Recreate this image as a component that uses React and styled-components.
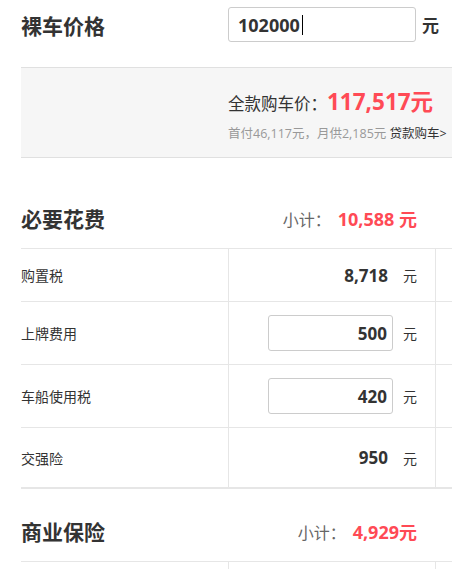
import React from "react";
import styled, { createGlobalStyle } from "styled-components";

const GlobalStyle = createGlobalStyle`
  body {
    margin: 0;
    background: #fff;
    overflow: hidden;
    font-family: "Open Sans", "Noto Sans CJK SC", sans-serif;
    color: #333;
  }
`;

const Page = styled.div`
  width: 480px;
  padding-left: 21px;
`;

const PriceRow = styled.div`
  display: flex;
  align-items: center;
  height: 35px;
  padding-top: 7px;
`;

const Title = styled.h2`
  margin: 0;
  width: 207px;
  font-size: 21px;
  font-weight: 700;
  color: #333;
  font-family: "Noto Sans CJK SC", sans-serif;
`;

const InputWrap = styled.div`
  position: relative;
`;

const PriceInput = styled.input`
  box-sizing: border-box;
  width: 188px;
  height: 35px;
  border: 1px solid #ccc;
  border-radius: 3px;
  padding: 0 9px;
  font-family: inherit;
  font-size: 18px;
  font-weight: 700;
  color: #333;
  outline: none;
  display: block;
`;

const Caret = styled.span`
  position: absolute;
  left: 74px;
  top: 8px;
  width: 1px;
  height: 20px;
  background: #000;
`;

const BoldUnit = styled.span`
  margin-left: 6px;
  font-size: 17px;
  font-weight: 700;
  font-family: "Noto Sans CJK SC", sans-serif;
`;

const TotalBox = styled.div`
  margin-top: 25px;
  height: 89px;
  background: #f6f6f6;
  border-top: 1px solid #e0e0e0;
  border-bottom: 1px solid #e0e0e0;
  padding-left: 207px;
  display: flex;
  flex-direction: column;
  justify-content: center;
`;

const TotalLine = styled.div`
  display: flex;
  align-items: baseline;
  font-size: 16.5px;
  color: #333;
  font-family: "Noto Sans CJK SC", sans-serif;
`;

const Red = styled.span`
  color: #ff4a55;
  font-weight: 700;
  font-size: ${(p) => p.$size || 18}px;
  font-family: "Open Sans", "Noto Sans CJK SC", sans-serif;
  margin-left: ${(p) => p.$gap || 0}px;
`;

const SubLine = styled.div`
  margin-top: 6px;
  font-size: 12.5px;
  color: #999;
  white-space: nowrap;
  span {
    color: #333;
  }
`;

const SectionHead = styled.div`
  display: flex;
  align-items: center;
  height: 60px;
  margin-top: ${(p) => p.$top}px;
  width: 396px;
`;

const HeadLine = styled.div`
  border-bottom: 1px solid #e6e6e6;
`;

const Subtotal = styled.div`
  margin-left: auto;
  display: flex;
  align-items: baseline;
  font-size: 16px;
  color: #666;
  font-family: "Noto Sans CJK SC", sans-serif;
`;

const Table = styled.div`
  border-top: 1px solid #e6e6e6;
  border-bottom: 2px solid #e6e6e6;
`;

const Row = styled.div`
  display: grid;
  grid-template-columns: 207px 208px 1fr;
  height: ${(p) => p.$h}px;
  & + & {
    border-top: 1px solid #e6e6e6;
  }
`;

const Label = styled.div`
  display: flex;
  align-items: center;
  font-size: 14px;
  color: #333;
  font-family: "Noto Sans CJK SC", sans-serif;
`;

const ValueCell = styled.div`
  display: flex;
  align-items: center;
  justify-content: flex-end;
  padding-right: 18px;
  border-left: 1px solid #e6e6e6;
  border-right: 1px solid #e6e6e6;
`;

const Amount = styled.span`
  font-size: 17px;
  font-weight: 700;
  color: #333;
  padding-right: 5px;
`;

const FeeInput = styled.input`
  box-sizing: border-box;
  width: 125px;
  height: 36px;
  border: 1px solid #ccc;
  border-radius: 3px;
  padding: 0 5px;
  text-align: right;
  font-family: inherit;
  font-size: 17px;
  font-weight: 700;
  color: #333;
  outline: none;
`;

const Unit = styled.span`
  margin-left: 10px;
  font-size: 14px;
  color: #333;
  font-family: "Noto Sans CJK SC", sans-serif;
`;

const fees = [
  { label: "购置税", value: "8,718", h: 52 },
  { label: "上牌费用", value: "500", input: true, h: 62 },
  { label: "车船使用税", value: "420", input: true, h: 62 },
  { label: "交强险", value: "950", h: 59 },
];

export default function App() {
  return (
    <Page>
      <GlobalStyle />
      <PriceRow>
        <Title>裸车价格</Title>
        <InputWrap>
          <PriceInput defaultValue="102000" />
          <Caret />
        </InputWrap>
        <BoldUnit>元</BoldUnit>
      </PriceRow>

      <TotalBox>
        <TotalLine>
          全款购车价：<Red $size={22.5}>117,517元</Red>
        </TotalLine>
        <SubLine>
          首付46,117元，月供2,185元 <span>贷款购车&gt;</span>
        </SubLine>
      </TotalBox>

      <SectionHead $top={30}>
        <Title>必要花费</Title>
        <Subtotal>
          小计：<Red $gap={7}>10,588 元</Red>
        </Subtotal>
      </SectionHead>
      <Table>
        {fees.map((f) => (
          <Row key={f.label} $h={f.h}>
            <Label>{f.label}</Label>
            <ValueCell>
              {f.input ? (
                <FeeInput defaultValue={f.value} />
              ) : (
                <Amount>{f.value}</Amount>
              )}
              <Unit>元</Unit>
            </ValueCell>
            <div />
          </Row>
        ))}
      </Table>

      <HeadLine>
        <SectionHead $top={12}>
          <Title>商业保险</Title>
          <Subtotal>
            小计：<Red $gap={7}>4,929元</Red>
          </Subtotal>
        </SectionHead>
      </HeadLine>
      <Row $h={20}>
        <div />
        <ValueCell />
        <div />
      </Row>
    </Page>
  );
}
